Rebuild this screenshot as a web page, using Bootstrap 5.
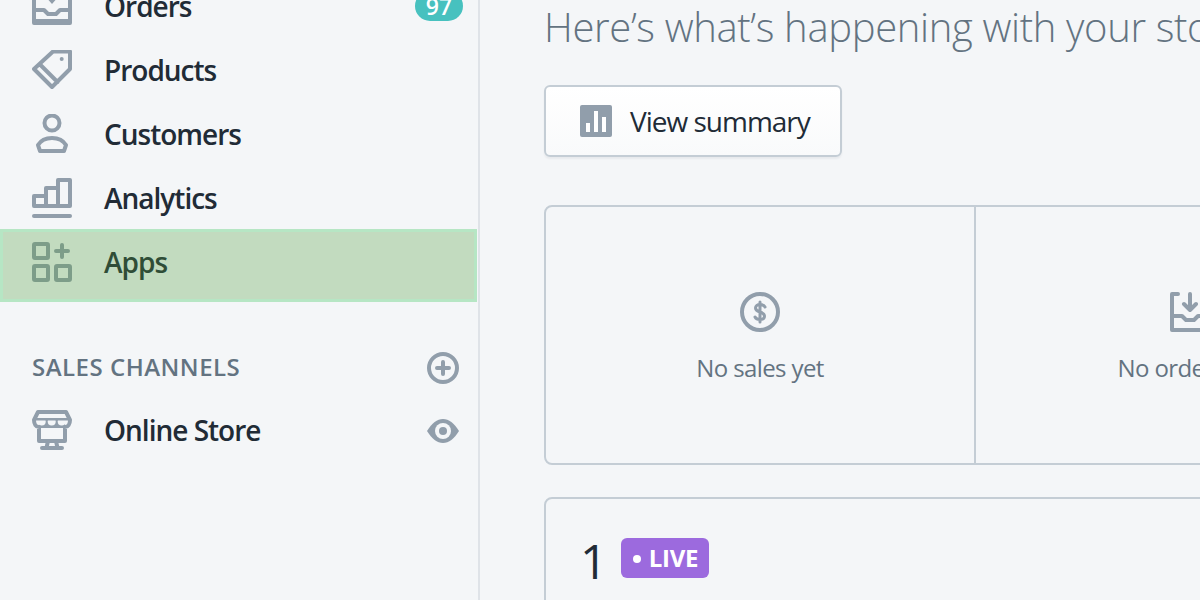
<!DOCTYPE html>
<html lang="en">
<head>
<meta charset="utf-8">
<title>Home</title>
<link href="https://cdn.jsdelivr.net/npm/bootstrap@5.3.0/dist/css/bootstrap.min.css" rel="stylesheet">
<style>
html,body{height:600px;overflow:hidden;background:#f4f6f8;}
body{font-family:"Open Sans","Noto Sans","Liberation Sans",sans-serif;color:#212b36;}
.shell{height:600px;overflow:hidden;}
.side{width:480px;flex:none;border-right:2px solid #dfe3e8;height:600px;}
.nav-items{margin-top:-26px;}
.nav-row{height:64px;padding:0 19px 0 32px;gap:32px;font-size:28px;font-weight:600;letter-spacing:-1px;}
.nav-row svg{flex:none;}
.nav-label{margin-top:-1px;}
.side-act{margin-top:2px;}
.ico{fill:none;stroke:#919eab;stroke-width:4;stroke-linejoin:round;stroke-linecap:round;}
.ico-thin{stroke-width:3;}
.ico-fill{fill:#919eab;stroke:none;}
.pill{margin-left:auto;margin-right:-4px;background:#47c1bf;color:#fff;border-radius:15px;font-size:23px;line-height:30px;height:30px;width:48px;text-align:center;font-weight:600;letter-spacing:0;}
.apps-wrap{position:relative;}
.apps-hi{position:absolute;left:0;right:1px;top:-1px;height:73px;background:rgba(80,156,60,.3);border:3px solid #b6e6c4;}
.chan-head{margin-top:41px;height:63px;padding:0 19px 0 32px;font-size:24px;font-weight:600;color:#637381;letter-spacing:.5px;}
.main-pane{padding-left:64px;min-width:0;flex:1;overflow:hidden;}
.greet{font-size:40px;color:#637381;font-weight:300;letter-spacing:-.35px;white-space:nowrap;margin:0;height:85px;padding-top:3px;line-height:48px;}
.sum-btn{width:298px;height:72px;border:2px solid #c4cdd5;border-radius:6px;background:linear-gradient(#fff,#f9fafb);box-shadow:0 2px 2px rgba(22,29,37,.05);padding:0 0 0 34px;gap:18px;font-size:28px;letter-spacing:-1px;color:#212b36;}
.stat-box{margin-top:48px;width:1300px;height:260px;border:2px solid #c4cdd5;border-radius:8px;}
.stat-cell{width:430px;flex:none;border-right:2px solid #c4cdd5;height:100%;font-size:24px;letter-spacing:-.6px;color:#637381;padding-top:85px;}
.stat-cell svg{margin-bottom:18px;}
.live-box{margin-top:32px;width:1300px;height:300px;border:2px solid #c4cdd5;border-radius:8px;padding:39px 34px 0;}
.live-num{font-size:48px;line-height:48px;gap:14px;}
.live-digit{margin-top:-1px;}
.live-tag{background:#9c6ade;color:#fff;font-size:24px;font-weight:700;letter-spacing:-.3px;border-radius:6px;height:40px;width:88px;line-height:40px;}
.live-tag i{display:inline-block;width:8px;height:8px;border-radius:50%;background:#fff;margin-right:8px;vertical-align:4px;}
.live-sub{font-size:24px;line-height:32px;color:#637381;margin-top:8px;letter-spacing:-.6px;}
</style>
</head>
<body>
<div class="shell d-flex">
  <aside class="side">
    <div class="nav-items">
      <div class="nav-row d-flex align-items-center">
        <svg width="40" height="40" viewBox="0 0 40 40"><path class="ico" d="M2 2V37H38V2M2 24H12L16 28H24L28 24H38M2 35H38"/><path class="ico-fill" d="M13 10H27L20 18Z"/></svg>
        <span class="nav-label">Orders</span><span class="pill">97</span>
      </div>
      <div class="nav-row d-flex align-items-center">
        <svg width="40" height="40" viewBox="0 0 40 40"><path class="ico" d="M21 1.500H38V19L20 37L2 19ZM7.500 14L25.500 32"/><circle class="ico-fill" cx="29.700" cy="9" r="2"/></svg>
        <span class="nav-label">Products</span>
      </div>
      <div class="nav-row d-flex align-items-center">
        <svg width="40" height="40" viewBox="0 0 40 40"><circle class="ico" cx="20" cy="9" r="7.500"/><path class="ico" d="M6 31C9 26 14 24 20 24S31 26 34 31L32 37H8Z"/></svg>
        <span class="nav-label">Customers</span>
      </div>
      <div class="nav-row d-flex align-items-center">
        <svg width="40" height="40" viewBox="0 0 40 40"><path class="ico" d="M2 28V18H14V28M14 28V10H26V28M26 28V2H38V28H2"/><path class="ico" d="M2 38H38"/></svg>
        <span class="nav-label">Analytics</span>
      </div>
      <div class="apps-wrap">
        <div class="nav-row d-flex align-items-center">
          <svg width="40" height="40" viewBox="0 0 40 40"><rect class="ico" x="2" y="2" width="14" height="14" rx="1"/><rect class="ico" x="2" y="24" width="14" height="14" rx="1"/><rect class="ico" x="24" y="24" width="14" height="14" rx="1"/><path class="ico" d="M24 9H36M30 3V15"/></svg>
          <span class="nav-label">Apps</span>
        </div>
        <div class="apps-hi"></div>
      </div>
    </div>
    <div class="chan-head d-flex align-items-center justify-content-between">
      <span>SALES CHANNELS</span>
      <svg class="side-act" width="32" height="32" viewBox="0 0 32 32"><circle class="ico" cx="16" cy="16" r="14"/><path class="ico" d="M16 10V22M10 16H22"/></svg>
    </div>
    <div class="nav-row d-flex align-items-center">
      <svg width="40" height="40" viewBox="0 0 40 40"><path class="ico-fill" d="M7 10H33V18H7Z"/><circle cx="9.700" cy="11.500" r="4" fill="#f4f6f8"/><circle cx="19.700" cy="11.500" r="4" fill="#f4f6f8"/><circle cx="29.700" cy="11.500" r="4" fill="#f4f6f8"/><path class="ico-fill" d="M2 8H38V10.500H2Z"/><path class="ico" d="M6 2H34L38 10C38 14 36 17 33 17V31H7V17C4 17 2 14 2 10ZM16 31L14.500 38M24 31L25.500 38M10 38H30"/></svg>
      <span class="nav-label">Online Store</span>
      <svg class="ms-auto side-act" width="32" height="24" viewBox="0 0 32 24"><path class="ico-fill" d="M0 12C5 4 10 0 16 0S27 4 32 12C27 20 22 24 16 24S5 20 0 12Z"/><circle cx="16" cy="12" r="8" fill="#f4f6f8"/><circle class="ico-fill" cx="16" cy="12" r="4"/></svg>
    </div>
  </aside>
  <main class="main-pane">
    <h1 class="greet">Here’s what’s happening with your store today.</h1>
    <button class="sum-btn d-flex align-items-center" type="button">
      <svg width="32" height="32" viewBox="0 0 32 32"><rect width="32" height="32" rx="2" fill="#919eab"/><path fill="#fff" d="M6 18H10V27H6ZM14 6H18V27H14ZM22 12H26V27H22Z"/></svg>
      <span>View summary</span>
    </button>
    <div class="stat-box d-flex">
      <div class="stat-cell d-flex flex-column align-items-center">
        <svg width="40" height="40" viewBox="0 0 40 40"><circle class="ico" cx="20" cy="20" r="18"/><path class="ico ico-thin" d="M25 15C24 13 22 12.500 20 12.500C17.500 12.500 15.500 13.800 15.500 16C15.500 21 24.500 19 24.500 24C24.500 26.300 22.500 27.500 20 27.500C18 27.500 16 27 15 25M20 10V30"/></svg>
        <span>No sales yet</span>
      </div>
      <div class="stat-cell d-flex flex-column align-items-center">
        <svg width="40" height="40" viewBox="0 0 40 40"><path class="ico" d="M8 2H2V38H38V2H32M2 24H12L16 28H24L28 24H38M20 2V18M14 12L20 18L26 12"/></svg>
        <span>No orders yet</span>
      </div>
    </div>
    <div class="live-box">
      <div class="live-num d-flex align-items-start"><span class="live-digit">1</span><span class="live-tag text-center"><i></i>LIVE</span></div>
      <div class="live-sub">Visitors right now</div>
    </div>
  </main>
</div>
<script src="https://cdn.jsdelivr.net/npm/bootstrap@5.3.0/dist/js/bootstrap.bundle.min.js"></script>
</body>
</html>
